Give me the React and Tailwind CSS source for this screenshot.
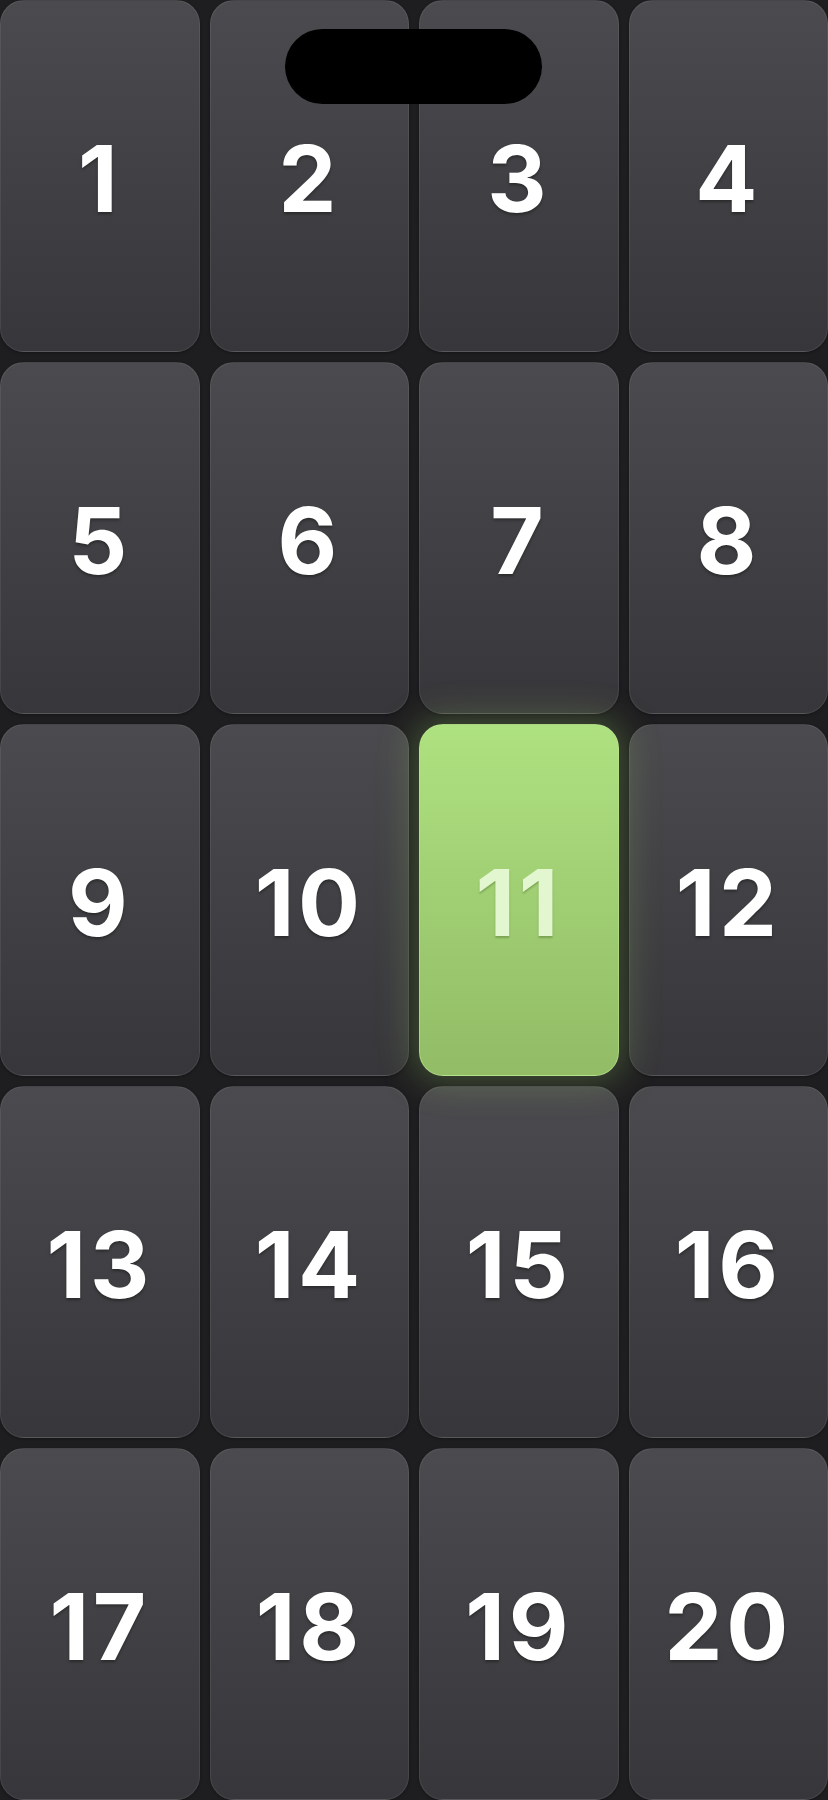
import React from "react";

const tiles = Array.from({ length: 20 }, (_, i) => i + 1);
const ACTIVE = 11;

function Tile({ n }) {
  const isActive = n === ACTIVE;
  if (isActive) {
    return (
      <div className="relative z-10 flex items-center justify-center pt-[6px] rounded-[24px] bg-gradient-to-b from-[#aee180] to-[#92bc66] border border-[#b9e48f]/60 shadow-[0_0_34px_8px_rgba(150,205,100,0.28)]">
        <span className="text-[92px] font-bold leading-none tracking-[0.04em] text-[#e2f6cf] [text-shadow:0_2px_2px_rgba(60,90,30,0.35)]">
          {n}
        </span>
      </div>
    );
  }
  return (
    <div className="flex items-center justify-center pt-[6px] rounded-[24px] bg-gradient-to-b from-[#4b4a4e] to-[#37363a] border border-white/[0.07] shadow-[0_1px_3px_rgba(0,0,0,0.35)]">
      <span className="text-[92px] font-bold leading-none tracking-[0.04em] text-white [text-shadow:0_2px_3px_rgba(0,0,0,0.35)]">
        {n}
      </span>
    </div>
  );
}

export default function App() {
  return (
    <div className="relative w-[828px] h-[1800px] overflow-hidden bg-[#1e1d20] font-['Inter','Liberation_Sans',sans-serif]">
      <div className="grid grid-cols-4 grid-rows-5 gap-[10px] h-full">
        {tiles.map((n) => (
          <Tile key={n} n={n} />
        ))}
      </div>
      {/* dynamic island */}
      <div className="absolute left-[285px] top-[29px] w-[257px] h-[75px] rounded-full bg-black" />
    </div>
  );
}
